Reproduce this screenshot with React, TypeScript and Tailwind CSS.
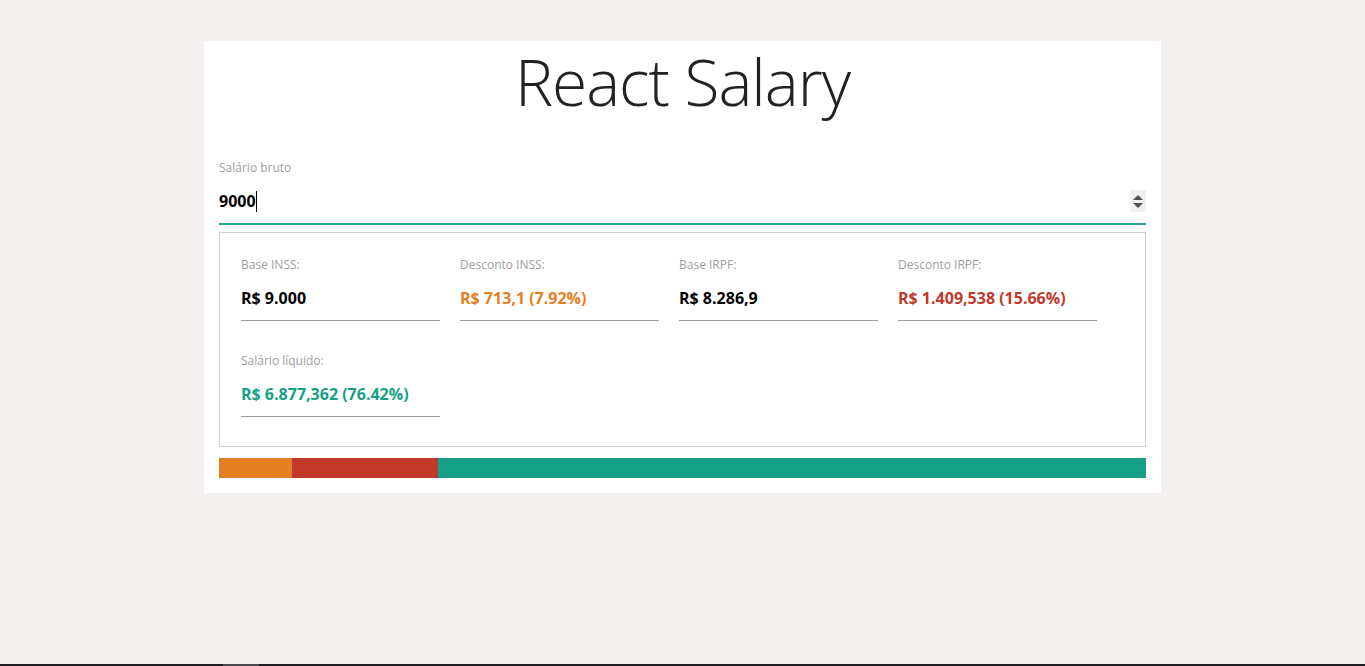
const INFO = [
  { label: "Base INSS:", value: "R$ 9.000", color: "text-black" },
  { label: "Desconto INSS:", value: "R$ 713,1 (7.92%)", color: "text-[#e67e22]" },
  { label: "Base IRPF:", value: "R$ 8.286,9", color: "text-black" },
  { label: "Desconto IRPF:", value: "R$ 1.409,538 (15.66%)", color: "text-[#c0392b]" },
  { label: "Salário líquido:", value: "R$ 6.877,362 (76.42%)", color: "text-[#16a085]" },
];

const BARS = [
  { percent: 7.92, color: "#e67e22" },
  { percent: 15.66, color: "#c0392b" },
  { percent: 76.42, color: "#16a085" },
];

export default function App() {
  return (
    <div
      className="min-h-screen flex flex-col bg-[#f4f0ef]"
      style={{ fontFamily: '"Open Sans", "Noto Sans", sans-serif' }}
    >
      <main className="flex-1 pt-[41px]">
        <div className="w-[957px] mx-auto bg-white px-[15px] pb-[15px]">
          <h1 className="text-center text-[64px] font-light leading-[78px] tracking-[-1px] text-[#222] pt-[2px]">
            React Salary
          </h1>

          <div className="mt-[39px]">
            <label className="block text-xs leading-4 text-[#9e9e9e]">
              Salário bruto
            </label>
            <div className="mt-[3px] h-[46px] flex items-center border-b-2 border-[#26a69a]">
              <span className="text-[16px] font-bold text-black">9000</span>
              <span className="w-px h-[21px] bg-black" />
              <div className="ml-auto w-[16px] h-[22px] bg-[#f0f0f0] flex flex-col items-center justify-center gap-[3px]">
                <svg width="10" height="5" viewBox="0 0 10 5">
                  <path d="M0 5 L5 0 L10 5 Z" fill="#505050" />
                </svg>
                <svg width="10" height="5" viewBox="0 0 10 5">
                  <path d="M0 0 L10 0 L5 5 Z" fill="#505050" />
                </svg>
              </div>
            </div>
          </div>

          <div className="mt-[7px] border border-[#d0d0d0] pt-[24px] pb-[29px] px-[21px]">
            <div className="flex flex-wrap gap-x-[20px] gap-y-[32px]">
              {INFO.map((item) => (
                <div key={item.label} className="w-[199px]">
                  <div className="text-xs leading-4 text-[#9e9e9e]">{item.label}</div>
                  <div
                    className={`pt-[15px] pb-[12px] text-[16px] leading-5 font-bold border-b border-[#9e9e9e] ${item.color}`}
                  >
                    {item.value}
                  </div>
                </div>
              ))}
            </div>
          </div>

          <div className="mt-[11px] h-[20px] flex">
            {BARS.map((b) => (
              <div key={b.color} style={{ width: `${b.percent}%`, backgroundColor: b.color }} />
            ))}
          </div>
        </div>
      </main>
      <div className="h-[2px] bg-[#1f1e23] flex">
        <div className="ml-[223px] w-[36px] bg-[#4a494d]" />
      </div>
    </div>
  );
}
